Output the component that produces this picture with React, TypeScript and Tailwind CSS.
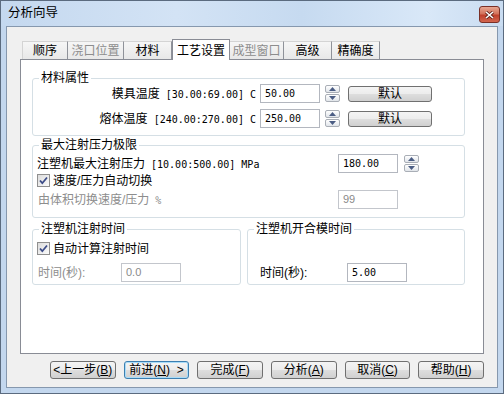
import React from "react";

const base = "font-['Liberation_Sans','Noto_Sans_CJK_SC',sans-serif]";

function M({ children }: { children: React.ReactNode }) {
  return (
    <span className="font-['DejaVu_Sans_Mono',monospace] text-[10px] whitespace-pre">
      {children}
    </span>
  );
}

function Spin() {
  return (
    <div className="flex flex-col gap-[1px] w-[15px]">
      <div className="h-[8px] border border-[#a9aeb6] rounded-[2px] bg-gradient-to-b from-white to-[#e1e5ea] flex items-center justify-center">
        <svg width="7" height="4" viewBox="0 0 7 4">
          <path d="M0 4 L3.5 0 L7 4Z" fill="#4b5d84" />
        </svg>
      </div>
      <div className="h-[8px] border border-[#a9aeb6] rounded-[2px] bg-gradient-to-b from-white to-[#e1e5ea] flex items-center justify-center">
        <svg width="7" height="4" viewBox="0 0 7 4">
          <path d="M0 0 L3.5 4 L7 0Z" fill="#4b5d84" />
        </svg>
      </div>
    </div>
  );
}

function Input({
  value,
  mono,
  disabled,
  w = "w-[60px]",
}: {
  value: string;
  mono?: boolean;
  disabled?: boolean;
  w?: string;
}) {
  return (
    <div
      className={`${w} h-[19px] border ${
        disabled ? "border-[#c3c6cc] text-[#8a8a8a]" : "border-[#b3b7bf] text-black"
      } bg-white flex items-center pl-[4px]`}
    >
      {mono ? (
        <M>{value}</M>
      ) : (
        <span className="font-['Liberation_Sans',sans-serif] text-[11px]">{value}</span>
      )}
    </div>
  );
}

function Check() {
  return (
    <div className="w-[13px] h-[13px] border border-[#8f8f8f] bg-gradient-to-br from-[#dcdcdc] to-[#fbfbfb] flex items-center justify-center">
      <svg width="11" height="11" viewBox="0 0 11 11">
        <path d="M2 5.5 L4.3 8.2 L9 2.5" stroke="#3c4c88" strokeWidth="1.8" fill="none" />
      </svg>
    </div>
  );
}

function Btn({
  children,
  focus,
  w = "w-[66px]",
  h = "h-[18px]",
}: {
  children: React.ReactNode;
  focus?: boolean;
  w?: string;
  h?: string;
}) {
  return (
    <div
      className={`${w} ${h} rounded-[3px] border ${
        focus ? "border-[#3c7fb1] shadow-[inset_0_0_0_1px_#a9dcf8]" : "border-[#707070]"
      } bg-[linear-gradient(#f4f4f4_0%,#ececec_50%,#dedede_50%,#d0d0d0_100%)] flex items-center justify-center text-[12px] leading-none text-black`}
    >
      {children}
    </div>
  );
}

function Group({
  title,
  className,
  children,
}: {
  title: string;
  className: string;
  children: React.ReactNode;
}) {
  return (
    <div className={`relative border border-[#d5dfe5] rounded-[3px] ${className}`}>
      <div className="absolute left-[6px] top-[-8px] px-[2px] bg-white leading-[14px] text-[12px] text-black">
        {title}
      </div>
      {children}
    </div>
  );
}

const tabs: { label: string; w: string; disabled?: boolean; selected?: boolean }[] = [
  { label: "顺序", w: "w-[46px]" },
  { label: "浇口位置", w: "w-[56px]", disabled: true },
  { label: "材料", w: "w-[48px]" },
  { label: "工艺设置", w: "w-[58px]", selected: true },
  { label: "成型窗口", w: "w-[54px]", disabled: true },
  { label: "高级", w: "w-[48px]" },
  { label: "精确度", w: "w-[48px]" },
];

export default function App() {
  return (
    <div
      className={`${base} w-[504px] h-[394px] border border-[#5b6b7f] bg-[#c3d7ee] flex flex-col text-[12px] text-black select-none`}
    >
      {/* Title bar */}
      <div className="h-[25px] flex justify-between bg-[linear-gradient(90deg,#c4d8ef_0%,#d3e3f5_35%,#c6daf0_60%,#d9e8f8_85%,#c9dcf1_100%)] pl-[7px] pr-[3px]">
        <div className="flex items-center text-[12.5px] text-black leading-none">分析向导</div>
        <div className="mt-[5px] w-[21px] h-[17px] rounded-[3px] border border-[#7a3027] bg-[linear-gradient(#e8a792_0%,#d3735c_45%,#c0402c_55%,#d2664f_100%)] flex items-center justify-center">
          <svg width="9" height="8" viewBox="0 0 9 8">
            <path d="M1 1 L8 7 M8 1 L1 7" stroke="#5a1f18" strokeWidth="3" />
            <path d="M1 1 L8 7 M8 1 L1 7" stroke="#ffffff" strokeWidth="1.6" />
          </svg>
        </div>
      </div>

      {/* Client */}
      <div className="mx-[5px] mb-[5px] flex-1 border border-[#8698ae] bg-[#f0f0f0] flex flex-col pt-[12px] px-[13px]">
        {/* Tabs */}
        <div className="h-[20px] flex items-end pl-[2px]">
          {tabs.map((t, i) =>
            t.selected ? (
              <div
                key={i}
                className={`${t.w} h-[21px] mb-[-1px] relative z-10 bg-white border-t border-l border-r border-[#898c95] flex items-center justify-center pt-[1px]`}
              >
                {t.label}
              </div>
            ) : (
              <div
                key={i}
                className={`${t.w} h-[18px] bg-gradient-to-b from-[#f6f6f6] to-[#e8e8e8] border-t border-t-[#d4d4d4] border-r border-r-[#8f9299] ${
                  i === 0 ? "border-l border-l-[#d4d4d4]" : ""
                } flex items-center justify-center ${t.disabled ? "text-[#8d8d8d]" : "text-black"}`}
              >
                {t.label}
              </div>
            )
          )}
        </div>

        {/* Panel */}
        <div className="h-[295px] border border-[#898c95] bg-white flex flex-col pl-[11px]">
          {/* Group 1 */}
          <Group title="材料属性" className="mt-[18px] w-[433px] h-[58px] pt-[5px] flex flex-col gap-[6px]">
            <div className="flex items-center h-[19px]">
              <div className="w-[223px] text-right whitespace-pre leading-none">
                模具温度<M>{" [30.00:69.00] C"}</M>
              </div>
              <div className="ml-[4px]">
                <Input value="50.00" mono />
              </div>
              <div className="ml-[5px]">
                <Spin />
              </div>
              <div className="ml-[8px]">
                <Btn w="w-[84px]" h="h-[16px]">默认</Btn>
              </div>
            </div>
            <div className="flex items-center h-[19px]">
              <div className="w-[223px] text-right whitespace-pre leading-none">
                熔体温度<M>{" [240.00:270.00] C"}</M>
              </div>
              <div className="ml-[4px]">
                <Input value="250.00" mono />
              </div>
              <div className="ml-[5px]">
                <Spin />
              </div>
              <div className="ml-[8px]">
                <Btn w="w-[84px]" h="h-[16px]">默认</Btn>
              </div>
            </div>
          </Group>

          {/* Group 2 */}
          <Group title="最大注射压力极限" className="mt-[9px] w-[433px] h-[73px] pt-[8px] pl-[4px] flex flex-col">
            <div className="flex items-center h-[19px]">
              <div className="w-[301px] whitespace-pre leading-none">
                注塑机最大注射压力<M>{" [10.00:500.00] MPa"}</M>
              </div>
              <Input value="180.00" mono />
              <div className="ml-[6px]">
                <Spin />
              </div>
            </div>
            <div className="flex items-center h-[15px] gap-[3px]">
              <Check />
              <span className="leading-none">速度/压力自动切换</span>
            </div>
            <div className="flex items-center h-[19px] mt-[2px]">
              <div className="w-[301px] pl-[1px] text-[#8d8d8d] whitespace-pre leading-none">
                由体积切换速度/压力<M>{" %"}</M>
              </div>
              <Input value="99" disabled />
            </div>
          </Group>

          {/* Groups 3/4 */}
          <div className="mt-[11px] flex gap-[6px]">
            <Group title="注塑机注射时间" className="w-[209px] h-[56px] pt-[12px] pl-[4px] flex flex-col">
              <div className="flex items-center h-[13px] gap-[3px]">
                <Check />
                <span className="leading-none">自动计算注射时间</span>
              </div>
              <div className="flex items-center h-[19px] mt-[8px]">
                <div className="w-[84px] pl-[1px] text-[#8d8d8d] leading-none">时间(秒):</div>
                <Input value="0.0" disabled />
              </div>
            </Group>
            <Group title="注塑机开合模时间" className="w-[218px] h-[56px] pt-[33px] pl-[12px] flex flex-col">
              <div className="flex items-center h-[19px]">
                <div className="w-[87px] leading-none">时间(秒):</div>
                <Input value="5.00" mono />
              </div>
            </Group>
          </div>
        </div>

        {/* Buttons */}
        <div className="mt-[7px] flex gap-[8px] pl-[30px]">
          <Btn>
            &lt;上一步(<u>B</u>)
          </Btn>
          <Btn focus>
            前进(<u>N</u>)&nbsp;&nbsp;&gt;
          </Btn>
          <Btn>
            完成(<u>F</u>)
          </Btn>
          <Btn>
            分析(<u>A</u>)
          </Btn>
          <Btn>
            取消(<u>C</u>)
          </Btn>
          <Btn>
            帮助(<u>H</u>)
          </Btn>
        </div>
      </div>
    </div>
  );
}
